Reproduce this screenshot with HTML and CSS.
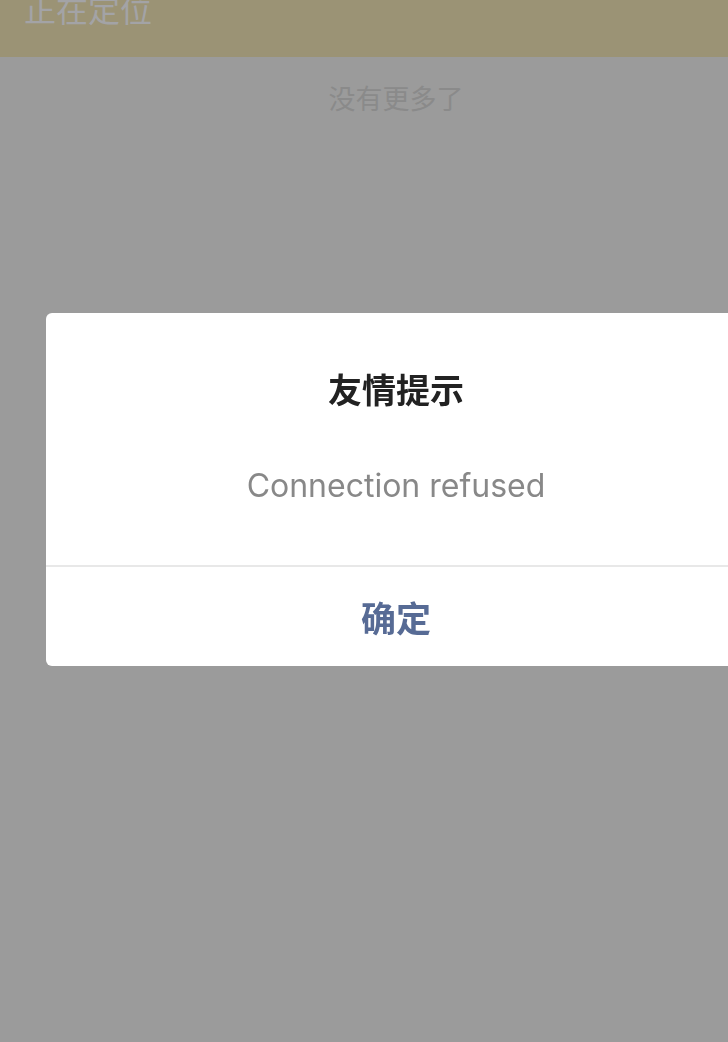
FILE: index.html
```html
<!DOCTYPE html>
<html lang="zh-CN">
<head>
<meta charset="utf-8">
<title>正在定位</title>
<link rel="stylesheet" href="styles.css">
</head>
<body>
<div class="page">
  <header class="topbar">
    <span class="locating">正在定位</span>
  </header>
  <div class="nomore">没有更多了</div>
</div>
<div class="mask">
  <div class="dialog">
    <div class="dialog-body">
      <div class="dialog-title">友情提示</div>
      <div class="dialog-msg">Connection refused</div>
    </div>
    <div class="dialog-footer">
      <button class="dialog-btn">确定</button>
    </div>
  </div>
</div>
</body>
</html>
```

FILE: styles.css
```css
html, body {
  margin: 0;
  padding: 0;
  overflow: hidden;
  width: 728px;
  height: 1042px;
  background: #9b9b9b;
  font-family: "Noto Sans CJK SC", "Noto Sans", sans-serif;
}
.page {
  width: 792px;
  height: 1042px;
}
.topbar {
  height: 57px;
  background: #9b9375;
  box-sizing: border-box;
  padding-left: 24px;
  display: flex;
  align-items: flex-end;
  padding-bottom: 32px;
}
.locating {
  font-size: 32px;
  line-height: 32px;
  color: #a3a3a6;
  display: block;
  transform: translateY(-1px);
}
.nomore {
  text-align: center;
  font-size: 27px;
  line-height: 40px;
  color: #8a8a8a;
  padding-top: 61px;
  margin-top: -40px;
}
.mask {
  position: fixed;
  left: 0;
  top: 0;
  width: 792px;
  height: 1042px;
  display: flex;
  justify-content: center;
  align-items: flex-start;
  padding-top: 313px;
  box-sizing: border-box;
}
.dialog {
  width: 700px;
  background: #ffffff;
  border-radius: 6px;
  overflow: hidden;
}
.dialog-body {
  height: 252px;
  box-sizing: border-box;
  padding-top: 52px;
  display: flex;
  flex-direction: column;
  align-items: center;
}
.dialog-title {
  font-size: 34px;
  line-height: 48px;
  font-weight: 700;
  color: #222222;
}
.dialog-msg {
  margin-top: 53px;
  font-family: "Inter", "Noto Sans", sans-serif;
  font-size: 32px;
  line-height: 40px;
  color: #888888;
}
.dialog-footer {
  border-top: 2px solid #e8e8e8;
  height: 99px;
  display: flex;
}
.dialog-btn {
  flex: 1;
  border: 0;
  background: transparent;
  font-family: "Noto Sans CJK SC", sans-serif;
  font-size: 35px;
  font-weight: 700;
  color: #576b95;
  padding: 0;
}
```
